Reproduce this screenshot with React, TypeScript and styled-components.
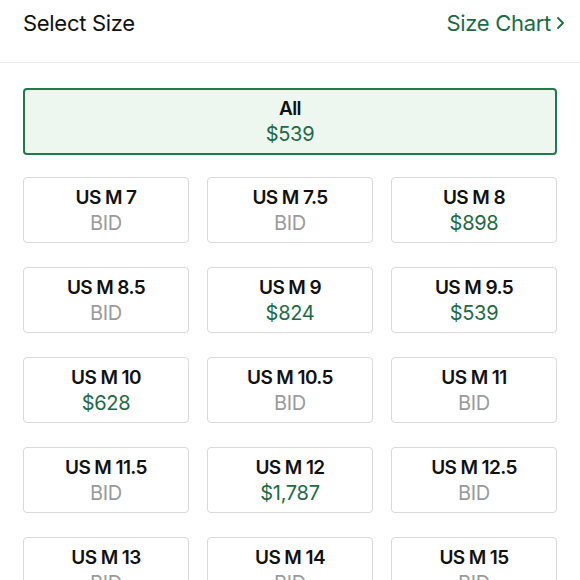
import React from "react";
import styled, { createGlobalStyle } from "styled-components";

const GlobalStyle = createGlobalStyle`
  html, body {
    margin: 0;
    padding: 0;
    background: #ffffff;
    overflow: hidden;
  }
  body {
    font-family: Inter, "Liberation Sans", Arial, sans-serif;
    -webkit-font-smoothing: antialiased;
  }
`;

const green = "#1c6b44";

interface Size {
  label: string;
  price?: string;
}

const sizes: Size[] = [
  { label: "US M 7" },
  { label: "US M 7.5" },
  { label: "US M 8", price: "$898" },
  { label: "US M 8.5" },
  { label: "US M 9", price: "$824" },
  { label: "US M 9.5", price: "$539" },
  { label: "US M 10", price: "$628" },
  { label: "US M 10.5" },
  { label: "US M 11" },
  { label: "US M 11.5" },
  { label: "US M 12", price: "$1,787" },
  { label: "US M 12.5" },
  { label: "US M 13" },
  { label: "US M 14" },
  { label: "US M 15" },
];

const Sheet = styled.div`
  width: 580px;
  background: #fff;
`;

const Header = styled.header`
  height: 63px;
  box-sizing: border-box;
  display: flex;
  align-items: flex-start;
  justify-content: space-between;
  padding: 10px 15px 0 23px;
  border-bottom: 1px solid #ececec;
`;

const Title = styled.h2`
  margin: 0;
  font-size: 22px;
  font-weight: 400;
  color: #111;
  letter-spacing: -0.3px;
`;

const ChartLink = styled.a`
  display: flex;
  align-items: center;
  gap: 5px;
  font-size: 22px;
  color: ${green};
  letter-spacing: -0.3px;
  cursor: pointer;
`;

const Body = styled.div`
  padding: 25px 23px 0 23px;
`;

const Option = styled.button<{ $selected?: boolean }>`
  box-sizing: border-box;
  width: 100%;
  display: flex;
  flex-direction: column;
  align-items: center;
  justify-content: center;
  gap: 3px;
  padding: 0;
  font-family: inherit;
  border-radius: 4px;
  border: ${(p) => (p.$selected ? `2px solid #1f7a4c` : "1.5px solid #dadada")};
  background: ${(p) => (p.$selected ? "#eef7ef" : "#fff")};
  height: ${(p) => (p.$selected ? "67px" : "66px")};
`;

const Label = styled.span`
  font-size: 19px;
  font-weight: 600;
  color: #111;
  letter-spacing: -0.6px;
  line-height: 22px;
`;

const Price = styled.span<{ $bid?: boolean }>`
  font-size: 20px;
  font-weight: 400;
  color: ${(p) => (p.$bid ? "#9b9b9b" : green)};
  letter-spacing: -0.3px;
  line-height: 22px;
`;

const Grid = styled.div`
  display: grid;
  grid-template-columns: repeat(3, 1fr);
  column-gap: 18px;
  row-gap: 24px;
  margin-top: 22px;
`;

const Chevron = () => (
  <svg width="9" height="14" viewBox="0 0 9 14" fill="none">
    <path d="M2 2l5 5-5 5" stroke={green} strokeWidth="1.8" strokeLinecap="round" strokeLinejoin="round" />
  </svg>
);

export default function App() {
  return (
    <Sheet>
      <GlobalStyle />
      <Header>
        <Title>Select Size</Title>
        <ChartLink>
          Size Chart
          <Chevron />
        </ChartLink>
      </Header>
      <Body>
        <Option $selected>
          <Label>All</Label>
          <Price>$539</Price>
        </Option>
        <Grid>
          {sizes.map((s) => (
            <Option key={s.label}>
              <Label>{s.label}</Label>
              <Price $bid={!s.price}>{s.price ?? "BID"}</Price>
            </Option>
          ))}
        </Grid>
      </Body>
    </Sheet>
  );
}
